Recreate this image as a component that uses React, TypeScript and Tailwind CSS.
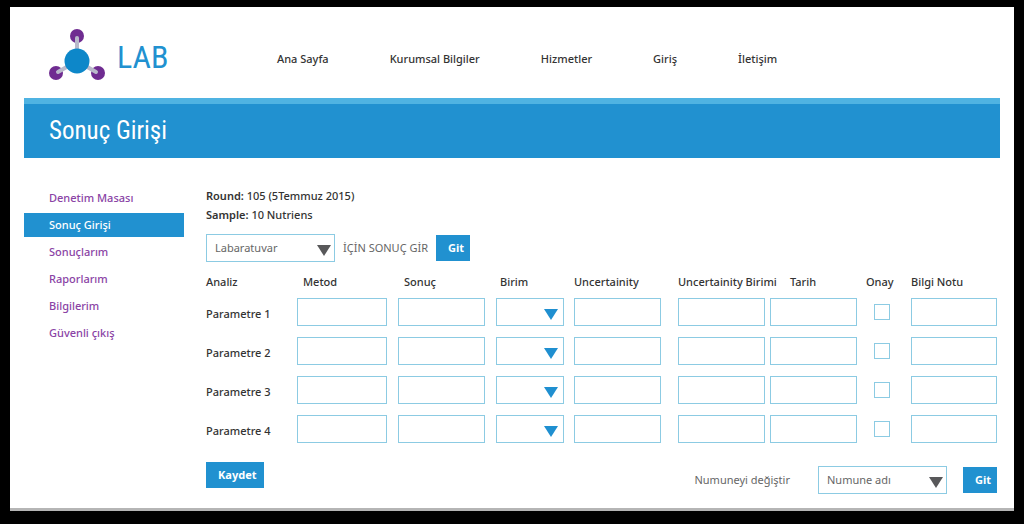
import React from 'react'
import clsx from 'clsx'

const navLinks = ['Ana Sayfa', 'Kurumsal Bilgiler', 'Hizmetler', 'Giriş', 'İletişim']

const menuItems = ['Denetim Masası', 'Sonuç Girişi', 'Sonuçlarım', 'Raporlarım', 'Bilgilerim', 'Güvenli çıkış']

const activeItem = 'Sonuç Girişi'

const parameters = ['Parametre 1', 'Parametre 2', 'Parametre 3', 'Parametre 4']

const boxClass = 'block h-7 w-full border border-[#8ccbe3] bg-white px-2 text-[11px] text-[#666] outline-none'

const displayFont = "font-['Roboto_Condensed','Roboto',sans-serif] font-normal"

function Logo() {
  return (
    <a href="#" className="flex w-[228px] items-center gap-3">
      <svg width="56" height="52" viewBox="0 0 56 52" aria-hidden="true">
        <g fill="#6f2c91">
          <circle cx="28" cy="7" r="7" />
          <circle cx="7" cy="44" r="7" />
          <circle cx="49" cy="44" r="7" />
        </g>
        <g stroke="#b9b9cb" strokeWidth="4" strokeLinecap="round">
          <path d="M28 32V9" />
          <path d="M28 32L9 43" />
          <path d="M28 32L47 43" />
        </g>
        <circle cx="28" cy="32" r="12.5" fill="#0d87c9" />
      </svg>
      <span className={clsx(displayFont, 'pt-1 text-[32px] leading-8 text-[#2191d0]')}>LAB</span>
    </a>
  )
}

function TextBox({ label }: { label: string }) {
  return <input type="text" aria-label={label} className={boxClass} />
}

function SelectBox({ id, label, option, dark }: { id?: string; label?: string; option?: string; dark?: boolean }) {
  return (
    <div className="relative">
      <select id={id} aria-label={label} className={clsx(boxClass, 'appearance-none')}>
        <option>{option}</option>
      </select>
      <svg
        width="14"
        height="11"
        viewBox="0 0 14 11"
        aria-hidden="true"
        className={clsx(
          'pointer-events-none absolute top-[11px]',
          dark ? 'right-1 text-[#58585a]' : 'right-1.5 text-[#1f8fd0]'
        )}
      >
        <path d="M0 0H14L7 11Z" fill="currentColor" />
      </svg>
    </div>
  )
}

function Button({ className, children }: { className: string; children: React.ReactNode }) {
  return (
    <button type="button" className={clsx('h-[26px] bg-[#2191d0] pl-3 text-[11px] leading-4 font-bold text-white', className)}>
      {children}
    </button>
  )
}

function ResultTable() {
  return (
    <table className="w-full table-fixed text-left whitespace-nowrap">
      <colgroup>
        <col className="w-[91px]" />
        <col className="w-[101px]" />
        <col className="w-[98px]" />
        <col className="w-[78px]" />
        <col className="w-[104px]" />
        <col className="w-[92px]" />
        <col className="w-[96px]" />
        <col className="w-[45px]" />
        <col className="w-[86px]" />
      </colgroup>
      <thead>
        <tr className="h-8 align-middle">
          <th className="font-medium">Analiz</th>
          <th className="pl-1.5 font-medium">Metod</th>
          <th className="pl-1.5 font-medium">Sonuç</th>
          <th className="pl-1 font-medium">Birim</th>
          <th className="font-medium">Uncertainity</th>
          <th className="font-medium">Uncertainity Birimi</th>
          <th className="pl-5 font-medium">Tarih</th>
          <th className="font-medium">Onay</th>
          <th className="font-medium">Bilgi Notu</th>
        </tr>
      </thead>
      <tbody>
        {parameters.map((name) => (
          <tr key={name} className="h-[39px] align-top">
            <th scope="row" className="pt-2 font-medium">{name}</th>
            <td className="pr-[11px]"><TextBox label={`${name} Metod`} /></td>
            <td className="pr-[11px]"><TextBox label={`${name} Sonuç`} /></td>
            <td className="pr-2.5"><SelectBox label={`${name} Birim`} /></td>
            <td className="pr-[17px]"><TextBox label={`${name} Uncertainity`} /></td>
            <td className="pr-[5px]"><TextBox label={`${name} Uncertainity Birimi`} /></td>
            <td className="pr-[9px]"><TextBox label={`${name} Tarih`} /></td>
            <td className="pt-1.5 pl-2">
              <input
                type="checkbox"
                aria-label={`${name} Onay`}
                className="block size-4 appearance-none border border-[#8ccbe3] bg-white checked:bg-[#2191d0]"
              />
            </td>
            <td><TextBox label={`${name} Bilgi Notu`} /></td>
          </tr>
        ))}
      </tbody>
    </table>
  )
}

export default function App() {
  return (
    <div className="min-h-screen bg-black px-2.5 pt-[7px] pb-3 font-['Noto_Sans',sans-serif] text-[11px] leading-4 text-[#333]">
      <div className="border-b-3 border-[#b5b5b5] bg-white px-3.5 pb-3.5">
        <header className="flex h-[91px] items-center pt-1 pl-[25px]">
          <Logo />
          <nav className="flex gap-[61px] pt-2 font-medium whitespace-nowrap">
            {navLinks.map((link) => (
              <a key={link} href="#">{link}</a>
            ))}
          </nav>
        </header>

        <div className="border-t-6 border-[#4fb3e2] bg-[#2191d0] px-[25px] py-3">
          <h1 className={clsx(displayFont, 'text-[25px] leading-[30px] text-white')}>Sonuç Girişi</h1>
        </div>

        <div className="flex gap-[22px] pt-7">
          {/* Side menu */}
          <ul className="w-40 shrink-0 font-medium">
            {menuItems.map((item) => (
              <li key={item} className="pb-[3px]">
                <a
                  href="#"
                  className={clsx(
                    'block h-6 pl-[25px] leading-6',
                    item === activeItem ? 'bg-[#2191d0] text-white' : 'text-[#8a43a5]'
                  )}
                >
                  {item}
                </a>
              </li>
            ))}
          </ul>

          <main className="min-w-0 flex-1 pr-[3px]">
            <div className="leading-[19px] font-medium">
              <p><span className="font-semibold">Round:</span> 105 (5Temmuz 2015)</p>
              <p><span className="font-semibold">Sample:</span> 10 Nutriens</p>
            </div>

            <div className="flex items-center pt-2.5">
              <div className="w-[129px]">
                <SelectBox id="laboratory" option="Labaratuvar" dark />
              </div>
              <label htmlFor="laboratory" className="px-2 text-[#666]">İÇİN SONUÇ GİR</label>
              <Button className="pr-1.5">Git</Button>
            </div>

            <div className="pt-1">
              <ResultTable />
            </div>

            <div className="flex items-start justify-between pt-2">
              <Button className="pr-2">Kaydet</Button>
              <div className="flex items-center pt-1">
                <label htmlFor="sample" className="pr-7 text-[#666]">Numuneyi değiştir</label>
                <div className="mr-4 w-[129px]">
                  <SelectBox id="sample" option="Numune adı" dark />
                </div>
                <Button className="pr-1.5">Git</Button>
              </div>
            </div>
          </main>
        </div>
      </div>
    </div>
  )
}
